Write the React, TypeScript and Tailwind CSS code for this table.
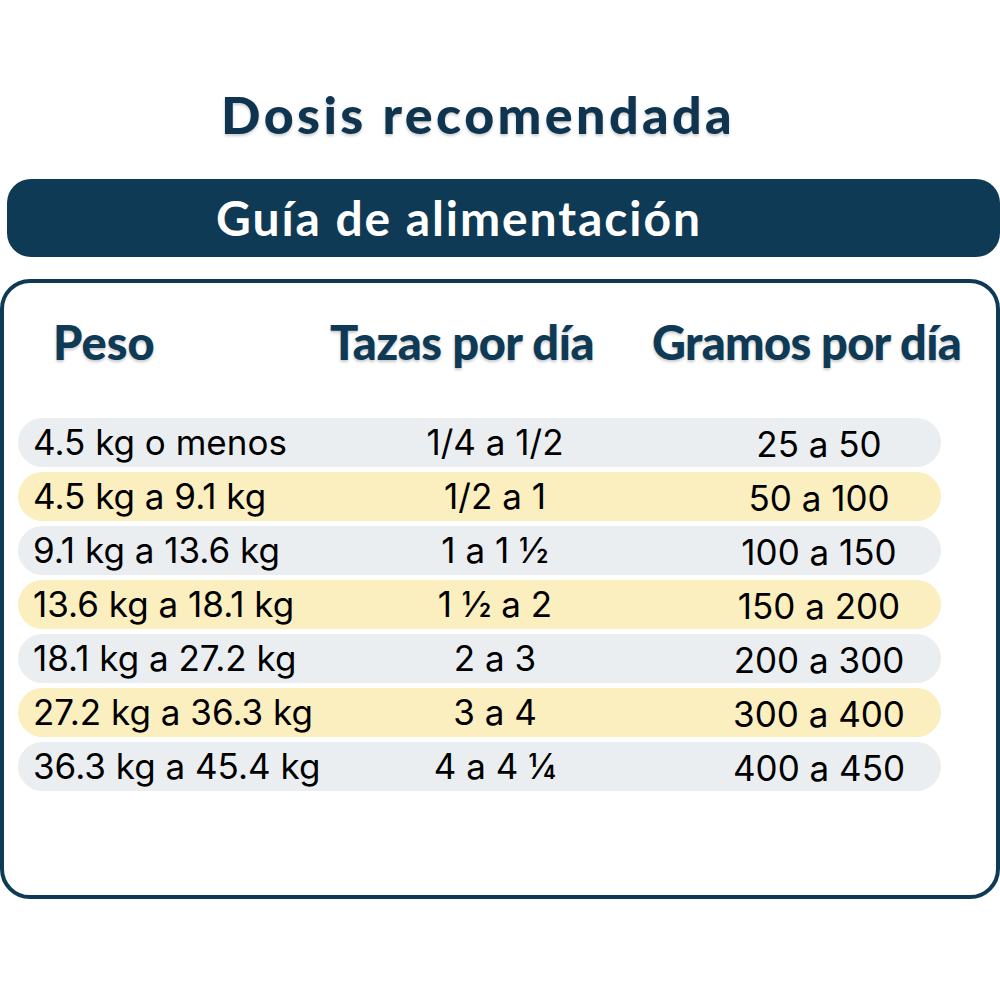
const rows = [
  { peso: '4.5 kg o menos', tazas: '1/4 a 1/2', gramos: '25 a 50' },
  { peso: '4.5 kg a 9.1 kg', tazas: '1/2 a 1', gramos: '50 a 100' },
  { peso: '9.1 kg a 13.6 kg', tazas: '1 a 1 ½', gramos: '100 a 150' },
  { peso: '13.6 kg a 18.1 kg', tazas: '1 ½ a 2', gramos: '150 a 200' },
  { peso: '18.1 kg a 27.2 kg', tazas: '2 a 3', gramos: '200 a 300' },
  { peso: '27.2 kg a 36.3 kg', tazas: '3 a 4', gramos: '300 a 400' },
  { peso: '36.3 kg a 45.4 kg', tazas: '4 a 4 ¼', gramos: '400 a 450' },
];

const headingFont = "font-['Lato',sans-serif]";

export default function App() {
  return (
    <div className="flex h-[1000px] w-[1000px] flex-col bg-white">
      <h1
        className={`${headingFont} mt-[84px] pl-[221px] text-[52px] font-black leading-[60px] tracking-[0.065em] text-[#0e3450] [text-shadow:0_2px_3px_rgba(0,0,0,0.2)]`}
      >
        Dosis recomendada
      </h1>

      <div className="ml-[7px] mt-[35px] flex h-[78px] items-center rounded-[24px] bg-[#0f3a55] pl-[209px]">
        <h2 className={`${headingFont} text-[48px] font-bold leading-none tracking-[0.04em] text-white`}>
          Guía de alimentación
        </h2>
      </div>

      <div className="mt-[22px] h-[620px] rounded-[30px] border-[4px] border-[#0f3a55] bg-white">
        <div
          className={`${headingFont} mt-[36px] grid grid-cols-[277px_322px_auto] pl-[49px] text-[47px] font-black leading-none text-[#0f3a55] [text-shadow:0_2px_3px_rgba(0,0,0,0.22)]`}
        >
          <span>Peso</span>
          <span className="tracking-[-0.01em]">Tazas por día</span>
          <span className="tracking-[-0.015em]">Gramos por día</span>
        </div>

        <div className="ml-[14px] mt-[52px] flex w-[923px] flex-col gap-[5px]">
          {rows.map((row, i) => (
            <div
              key={row.peso}
              className={`grid h-[49px] grid-cols-[377px_200px_346px] items-center rounded-full font-['Inter',sans-serif] text-[35px] leading-none text-black ${
                i % 2 === 0 ? 'bg-[#ebeef1]' : 'bg-[#fbeebf]'
              }`}
            >
              <span className="pl-[15px]">{row.peso}</span>
              <span className="text-center">{row.tazas}</span>
              <span className="mt-[4px] pl-[102px] text-center">{row.gramos}</span>
            </div>
          ))}
        </div>
      </div>
    </div>
  );
}
